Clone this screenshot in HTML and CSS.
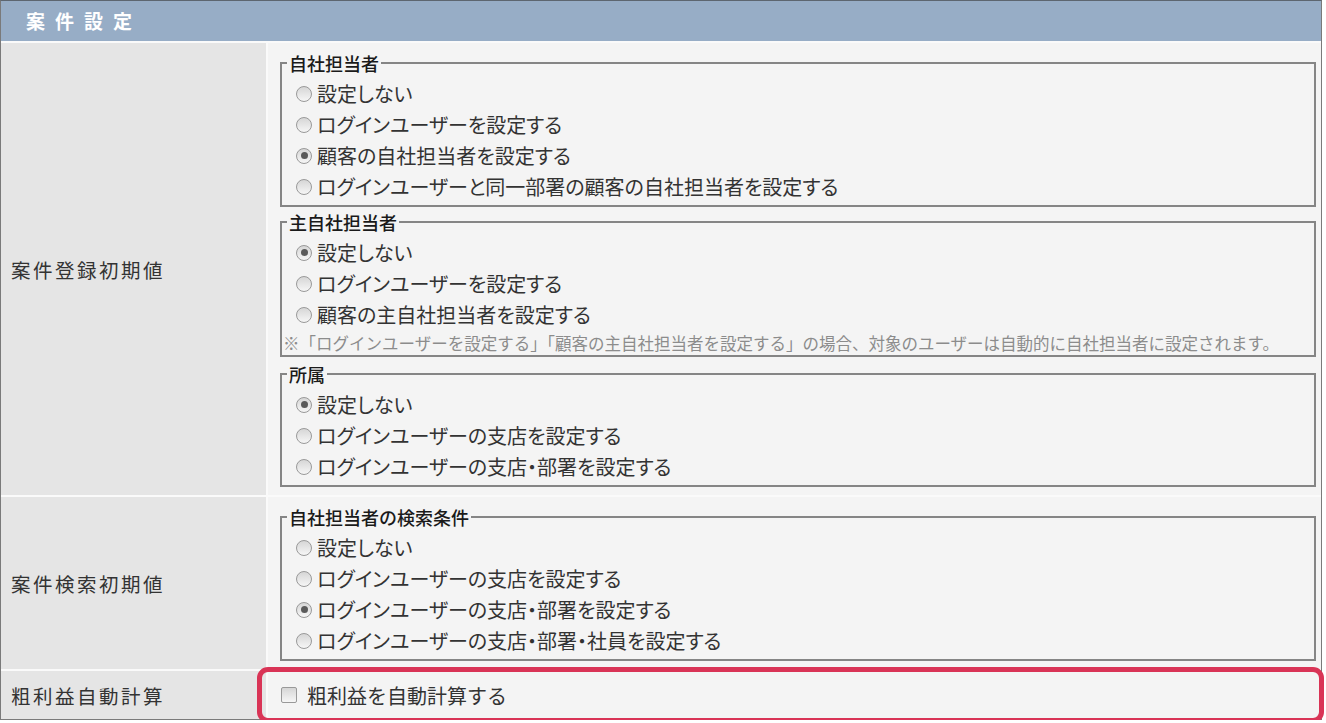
FILE: index.html
```html
<!DOCTYPE html>
<html lang="ja">
<head>
  <meta charset="UTF-8" />
  <title>案件設定</title>
  <link rel="stylesheet" href="styles.css">
</head>
<body>
  <div class="panel">
    <div class="panel-head">案件設定</div>

    <div class="row">
      <div class="label">案件登録初期値</div>
      <div class="value">
        <fieldset class="group">
          <legend>自社担当者</legend>
          <div class="opt"><span class="radio"></span>設定しない</div>
          <div class="opt"><span class="radio"></span>ログインユーザーを設定する</div>
          <div class="opt"><span class="radio on"></span>顧客の自社担当者を設定する</div>
          <div class="opt"><span class="radio"></span>ログインユーザーと同一部署の顧客の自社担当者を設定する</div>
        </fieldset>

        <fieldset class="group has-note">
          <legend>主自社担当者</legend>
          <div class="opt"><span class="radio on"></span>設定しない</div>
          <div class="opt"><span class="radio"></span>ログインユーザーを設定する</div>
          <div class="opt"><span class="radio"></span>顧客の主自社担当者を設定する</div>
          <div class="note">※「ログインユーザーを設定する」「顧客の主自社担当者を設定する」の場合、対象のユーザーは自動的に自社担当者に設定されます。</div>
        </fieldset>

        <fieldset class="group">
          <legend>所属</legend>
          <div class="opt"><span class="radio on"></span>設定しない</div>
          <div class="opt"><span class="radio"></span>ログインユーザーの支店を設定する</div>
          <div class="opt"><span class="radio"></span>ログインユーザーの支店・部署を設定する</div>
        </fieldset>
      </div>
    </div>

    <div class="row">
      <div class="label">案件検索初期値</div>
      <div class="value">
        <fieldset class="group">
          <legend>自社担当者の検索条件</legend>
          <div class="opt"><span class="radio"></span>設定しない</div>
          <div class="opt"><span class="radio"></span>ログインユーザーの支店を設定する</div>
          <div class="opt"><span class="radio on"></span>ログインユーザーの支店・部署を設定する</div>
          <div class="opt"><span class="radio"></span>ログインユーザーの支店・部署・社員を設定する</div>
        </fieldset>
      </div>
    </div>

    <div class="row row-last">
      <div class="label">粗利益自動計算</div>
      <div class="value value-check">
        <span class="check"></span>粗利益を自動計算する
      </div>
    </div>

    <div class="highlight"></div>
  </div>
</body>
</html>
```

FILE: styles.css
```css
body {
  margin: 0;
  font-family: "Noto Sans CJK JP", "Noto Sans", sans-serif;
  color: #333;
  background: #fff;
}
.panel {
  position: relative;
  width: 1322px;
  box-sizing: border-box;
  border: 1px solid #7a7a7a;
  border-top-color: #5d6670;
  background: #fafafa;
  display: flex;
  flex-direction: column;
  gap: 2px;
}
.panel-head {
  height: 40px;
  line-height: 40px;
  padding-left: 25px;
  background: #97adc6;
  color: #fff;
  font-size: 19px;
  font-weight: bold;
  letter-spacing: 10px;
}
.row {
  display: grid;
  grid-template-columns: 265px 1fr;
  gap: 2px;
}
.label {
  background: #e5e5e5;
  display: flex;
  align-items: center;
  padding-left: 10px;
  font-size: 19.5px;
  letter-spacing: 2.5px;
}
.value {
  background: #f4f4f4;
  padding: 10px 5px 8px 12px;
}
.group {
  margin: 0 0 5px;
  padding: 5px 0 3px;
  border: 2px solid #858585;
}
.group:last-child {
  margin-bottom: 0;
}
.group.has-note {
  margin-bottom: 7px;
  padding-bottom: 1px;
}
.group legend {
  margin-left: 5px;
  padding: 0 2px;
  font-size: 18px;
  line-height: 20px;
  color: #1a1a1a;
  font-weight: 500;
}
.opt {
  display: flex;
  align-items: center;
  gap: 6px;
  padding-left: 15px;
  height: 31px;
  font-size: 20px;
  font-feature-settings: "palt";
  white-space: nowrap;
}
.radio {
  width: 16px;
  height: 16px;
  box-sizing: border-box;
  border-radius: 50%;
  border: 1px solid #999;
  background: linear-gradient(#d6d6d6, #f6f6f6);
  position: relative;
  flex: none;
  margin-left: -1px;
  margin-right: -1px;
}
.radio.on::after {
  content: "";
  position: absolute;
  left: 3.5px;
  top: 3.5px;
  width: 7px;
  height: 7px;
  border-radius: 50%;
  background: #5a5a5a;
}
.note {
  margin-top: 2px;
  padding-left: 1px;
  line-height: 22px;
  font-size: 16.5px;
  color: #8c8c8c;
  white-space: nowrap;
}
.row-last {
  height: 48px;
}
.value-check {
  display: flex;
  align-items: center;
  padding: 0 0 0 13px;
  font-size: 20px;
}
.check {
  width: 16px;
  height: 16px;
  box-sizing: border-box;
  border: 1px solid #999;
  border-radius: 2px;
  background: linear-gradient(#d6d6d6, #f6f6f6);
  margin-right: 10px;
}
.highlight {
  position: absolute;
  left: 256px;
  top: 666px;
  width: 1067px;
  height: 56px;
  box-sizing: border-box;
  border: 5px solid #d93456;
  border-radius: 11px;
  pointer-events: none;
}
```
